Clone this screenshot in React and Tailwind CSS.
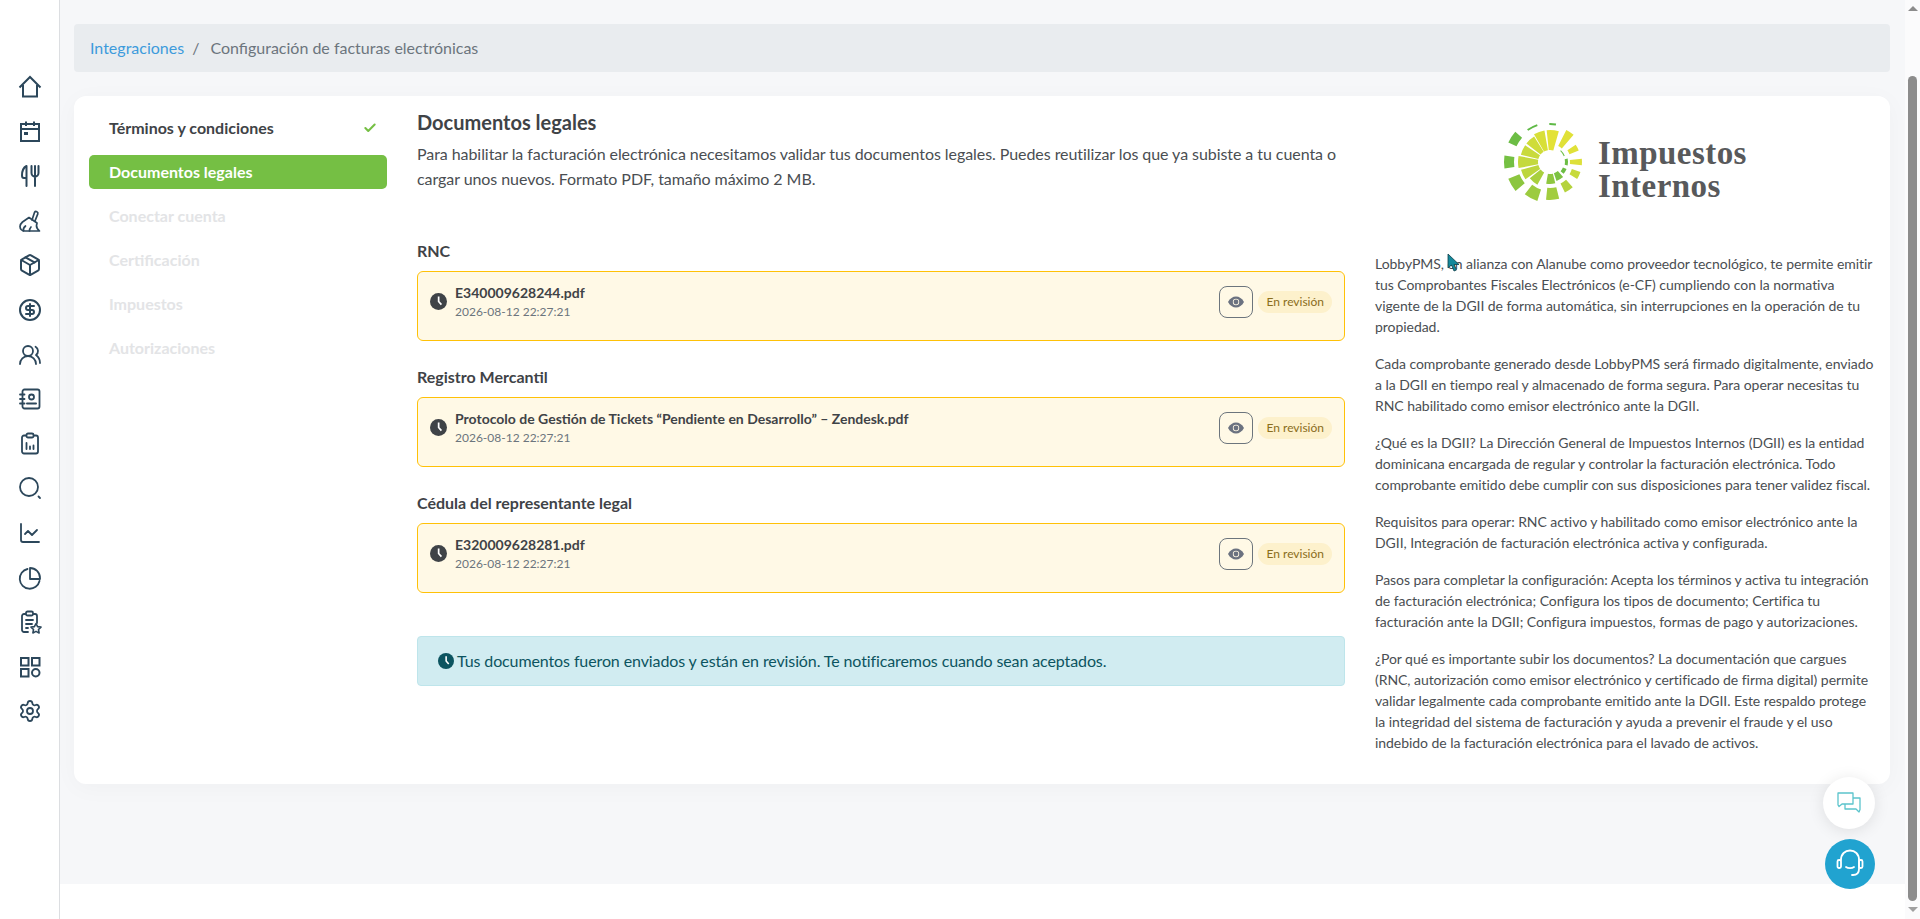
import React from "react";
import { Package, CircleDollarSign, UsersRound, ChartLine, Settings, Check } from "lucide-react";

const iconProps = { size: 24, strokeWidth: 1.8 };

const HomeIcon = () => (
  <svg width="24" height="24" viewBox="0 0 24 24" fill="none" stroke="currentColor" strokeWidth="2">
    <path d="M1.500 12.500L12 2l10.500 10.500" />
    <path d="M5 10v11.500h14V10" />
  </svg>
);

const CalendarIcon = () => (
  <svg width="24" height="24" viewBox="0 0 24 24" fill="none" stroke="currentColor" strokeWidth="2">
    <rect x="3" y="4" width="18" height="17" />
    <path d="M3 9h18M8 1.500V6M16 1.500V6" />
    <rect x="6" y="12" width="4" height="3" fill="currentColor" stroke="none" />
  </svg>
);

const CutleryIcon = () => (
  <svg width="24" height="24" viewBox="0 0 24 24" fill="none" stroke="currentColor" strokeWidth="2" strokeLinecap="round" strokeLinejoin="round">
    <path d="M8.500 22V2C5.500 3.500 4 7 4 11.500c0 1.500.8 2.500 2 2.500h2.500" />
    <path d="M13.500 2v7a3.500 3.500 0 0 0 7 0V2M17 2v20" />
  </svg>
);

const BroomIcon = () => (
  <svg width="24" height="24" viewBox="0 0 24 24" fill="none" stroke="currentColor" strokeWidth="1.700" strokeLinecap="round" strokeLinejoin="round">
    <path d="M14 11l2.500-7.500a1.800 1.800 0 0 1 3.300 1.400L17 12" />
    <path d="M11 8.500l8 5.500-.5 2.500c-.2 1.500 1 3.600 3 5.500H7c-3 0-5-2-5-4.500 0-1.500.8-3 2.500-4.500L11 8.500z" />
    <path d="M5.500 22c-.5-2 0-3.500 2-5M11.500 22c0-2 .5-3 1.500-4" />
  </svg>
);

const ContactIcon = () => (
  <svg width="24" height="24" viewBox="0 0 24 24" fill="none" stroke="currentColor" strokeWidth="1.800" strokeLinecap="round">
    <rect x="4.500" y="2.500" width="17" height="19" rx="2" />
    <path d="M2 7.500h4.500M2 12h4.500M2 16.500h4.500" />
    <circle cx="13.500" cy="10" r="2.500" />
    <path d="M9 16.500h9" strokeWidth="2" />
  </svg>
);

const ClipboardBars = () => (
  <svg width="24" height="24" viewBox="0 0 24 24" fill="none" stroke="currentColor" strokeWidth="1.800" strokeLinecap="round">
    <rect x="4" y="3.500" width="16" height="18" rx="2" />
    <rect x="8.500" y="1.500" width="7" height="4" rx="1.500" fill="#fff" />
    <path d="M8.500 11v6M12 14.500V17M15.500 13.500V17" />
  </svg>
);

const SearchIcon = () => (
  <svg width="24" height="24" viewBox="0 0 24 24" fill="none" stroke="currentColor" strokeWidth="1.800" strokeLinecap="round">
    <circle cx="11" cy="11" r="9" />
    <path d="M20.500 20.500l1.500 1.500" />
  </svg>
);

const PieIcon = () => (
  <svg width="24" height="24" viewBox="0 0 24 24" fill="none" stroke="currentColor" strokeWidth="1.800" strokeLinecap="round" strokeLinejoin="round">
    <path d="M21.500 15a10 10 0 1 1-12-12" />
    <path d="M12 2a10 10 0 0 1 10 10v1H12z" />
  </svg>
);

const ClipboardStar = () => (
  <svg width="24" height="24" viewBox="0 0 24 24" fill="none" stroke="currentColor" strokeWidth="1.800" strokeLinecap="round">
    <path d="M10 22H6a2 2 0 0 1-2-2V6a2 2 0 0 1 2-2h11a2 2 0 0 1 2 2v7" />
    <rect x="8" y="1.500" width="7" height="4" rx="1.500" fill="#fff" />
    <path d="M8 10h7M8 14h6M8 18h2" />
    <path d="M18 13.500l1.600 3.100 3.400.5-2.500 2.400.6 3.500-3.100-1.600-3.100 1.600.6-3.500-2.500-2.400 3.400-.5z" strokeWidth="1.600" fill="#fff" strokeLinejoin="round" />
  </svg>
);

const GridIcon = () => (
  <svg width="24" height="24" viewBox="0 0 24 24" fill="none" stroke="currentColor" strokeWidth="2">
    <rect x="3" y="3" width="7.500" height="7.500" />
    <rect x="14" y="3" width="7.500" height="7.500" />
    <rect x="3" y="14" width="7.500" height="7.500" />
    <circle cx="17.750" cy="17.750" r="3.750" />
  </svg>
);

const sideIcons = [
  <HomeIcon key="home" />,
  <CalendarIcon key="cal" />,
  <CutleryIcon key="food" />,
  <BroomIcon key="brush" />,
  <Package key="box" size={24} strokeWidth={2} />,
  <CircleDollarSign key="dollar" size={24} strokeWidth={2} />,
  <UsersRound key="users" {...iconProps} />,
  <ContactIcon key="contact" />,
  <ClipboardBars key="clip" />,
  <SearchIcon key="search" />,
  <ChartLine key="chart" {...iconProps} />,
  <PieIcon key="pie" />,
  <ClipboardStar key="star" />,
  <GridIcon key="grid" />,
  <Settings key="settings" {...iconProps} />,
];

const ClockIcon = ({ className }) => (
  <svg viewBox="0 0 24 24" className={className}>
    <circle cx="12" cy="12" r="12" fill="currentColor" />
    <path d="M11 5h2.400v6.500l3.600 4.200-1.800 1.500-4.200-5z" fill="#fff" />
  </svg>
);

const EyeIcon = () => (
  <svg width="16" height="12" viewBox="0 0 16 12">
    <path d="M0 6c2-3.600 4.800-5.500 8-5.500S14 2.400 16 6c-2 3.600-4.800 5.500-8 5.500S2 9.600 0 6z" fill="#6b7280" />
    <circle cx="8" cy="6" r="3.200" fill="#fff8e4" />
    <circle cx="8" cy="6" r="2.400" fill="#6b7280" />
  </svg>
);

// annular sector, angles clockwise from north
const sector = (r1, r2, a, w) => {
  const pt = (r, deg) => {
    const t = ((deg - 90) * Math.PI) / 180;
    return `${(r * Math.cos(t)).toFixed(2)} ${(r * Math.sin(t)).toFixed(2)}`;
  };
  return `M${pt(r1, a - w)} L${pt(r2, a - w)} A${r2} ${r2} 0 0 1 ${pt(r2, a + w)} L${pt(r1, a + w)} A${r1} ${r1} 0 0 0 ${pt(r1, a - w)}Z`;
};

const logoParts = [
  // inner wedges
  [12, 32, 5, 11, "#e3e236"],
  [12, 32, -20, 10, "#d8df38"],
  [12, 30, -42, 10, "#cfdc3a"],
  [12, 30, -66, 10, "#c9da3c"],
  [12, 32, -90, 11, "#c4d93d"],
  [12, 30, -115, 10, "#bdd63d"],
  [12, 26, -140, 11, "#a9d03e"],
  [12, 22, 178, 12, "#8fc740"],
  [12, 20, 150, 11, "#7cc242"],
  [14, 18, 122, 9, "#6cbd45"],
  [15, 18, 90, 11, "#6cbd45"],
  [15, 16, 55, 12, "#6cbd45"],
  // outer blocks
  [20, 32, 90, 6, "#dde03a"],
  [21, 31, 62, 6, "#e0e138"],
  [18, 36, 34, 7, "#e0e138"],
  [23, 32, 115, 7, "#c7da3c"],
  [24, 34, 146, 8, "#b5d33e"],
  [26, 38, 176, 10, "#a2cd3f"],
  [29, 41, 208, 10, "#9ccb40"],
  [33, 45, 239, 9, "#8cc63f"],
  [36, 46, 270, 8, "#75c043"],
  [37, 46, 303, 8, "#6cbd45"],
  [38, 40, 333, 8, "#5fb946"],
  [37, 39, 4, 5, "#5fb946"],
];

const Logo = () => (
  <div className="mt-[12px] flex items-center h-[80px] pl-[128px]">
    <svg width="82" height="80" viewBox="-47 -40 82 80" className="shrink-0">
      {logoParts.map(([r1, r2, a, w, c]) => (
        <path key={`${r1}-${a}`} d={sector(r1, r2, a, w)} fill={c} />
      ))}
    </svg>
    <div className="ml-[13px] pt-[16px] font-['Liberation_Serif',serif] font-bold text-[#58595b] text-[33px] leading-[33px] tracking-[0.45px]">
      <div>Impuestos</div>
      <div>Internos</div>
    </div>
  </div>
);

const steps = [
  { label: "Términos y condiciones", state: "done" },
  { label: "Documentos legales", state: "active" },
  { label: "Conectar cuenta" },
  { label: "Certificación" },
  { label: "Impuestos" },
  { label: "Autorizaciones" },
];

const docs = [
  { title: "RNC", file: "E340009628244.pdf" },
  { title: "Registro Mercantil", file: "Protocolo de Gestión de Tickets “Pendiente en Desarrollo” – Zendesk.pdf" },
  { title: "Cédula del representante legal", file: "E320009628281.pdf" },
];

const paragraphs = [
  "LobbyPMS, en alianza con Alanube como proveedor tecnológico, te permite emitir tus Comprobantes Fiscales Electrónicos (e-CF) cumpliendo con la normativa vigente de la DGII de forma automática, sin interrupciones en la operación de tu propiedad.",
  "Cada comprobante generado desde LobbyPMS será firmado digitalmente, enviado a la DGII en tiempo real y almacenado de forma segura. Para operar necesitas tu RNC habilitado como emisor electrónico ante la DGII.",
  "¿Qué es la DGII? La Dirección General de Impuestos Internos (DGII) es la entidad dominicana encargada de regular y controlar la facturación electrónica. Todo comprobante emitido debe cumplir con sus disposiciones para tener validez fiscal.",
  "Requisitos para operar: RNC activo y habilitado como emisor electrónico ante la DGII, Integración de facturación electrónica activa y configurada.",
  "Pasos para completar la configuración: Acepta los términos y activa tu integración de facturación electrónica; Configura los tipos de documento; Certifica tu facturación ante la DGII; Configura impuestos, formas de pago y autorizaciones.",
  "¿Por qué es importante subir los documentos? La documentación que cargues (RNC, autorización como emisor electrónico y certificado de firma digital) permite validar legalmente cada comprobante emitido ante la DGII. Este respaldo protege la integridad del sistema de facturación y ayuda a prevenir el fraude y el uso indebido de la facturación electrónica para el lavado de activos.",
];

export default function App() {
  return (
    <div className="flex h-[919px] overflow-hidden bg-white font-['Lato',sans-serif] text-[#3f4347]">
      {/* Sidebar */}
      <aside className="w-[60px] shrink-0 border-r border-[#dcdee1] flex flex-col items-center pt-[75px] gap-[20.600px] text-[#2c475b]">
        {sideIcons}
      </aside>

      {/* Content */}
      <div className="flex-1 min-w-0 relative">
        <main className="h-[884px] bg-[#f6f7f9] pt-[24px] pl-[14px] pr-[15px]">
          <nav className="h-[48px] bg-[#e9ecef] rounded-[4px] flex items-center px-[16px] text-[16px]">
            <span className="text-[#3d9bdc]">Integraciones</span>
            <span className="text-[#6c757d] px-[8px]">/</span>
            <span className="text-[#6c757d] pl-[3px]">Configuración de facturas electrónicas</span>
          </nav>

          <section className="mt-[24px] h-[688px] bg-white rounded-[12px] shadow-[0_4px_24px_rgba(0,0,0,0.03)] flex pl-[15px] pr-[15px]">
            {/* Steps */}
            <div className="w-[298px] shrink-0 pt-[15px]">
              {steps.map((s) => (
                <div
                  key={s.label}
                  className={`h-[34px] mb-[10px] pl-[20px] pr-[10px] rounded-[5px] flex items-center justify-between text-[16px] font-bold ${
                    s.state === "active" ? "bg-[#75bf44] text-white" : s.state === "done" ? "text-[#3f4347]" : "text-[#e3e4e6]"
                  }`}
                >
                  {s.label}
                  {s.state === "done" && <Check size={14} strokeWidth={3.500} className="text-[#75bf44]" />}
                </div>
              ))}
            </div>

            {/* Documents */}
            <div className="w-[928px] shrink-0 ml-[30px] pt-[14px]">
              <h2 className="text-[20px] leading-[24px] font-bold">Documentos legales</h2>
              <p className="mt-[7px] text-[16px] leading-[25px] tracking-[-0.065px] text-[#4a4e52]">
                Para habilitar la facturación electrónica necesitamos validar tus documentos legales. Puedes reutilizar los que ya subiste a tu cuenta o cargar unos nuevos. Formato PDF, tamaño máximo 2 MB.
              </p>

              <div className="mt-[48px] flex flex-col gap-[24px]">
                {docs.map((d) => (
                  <div key={d.title}>
                    <h3 className="text-[16px] leading-[24px] font-bold">{d.title}</h3>
                    <div className="mt-[8px] h-[70px] bg-[#fff9e6] border border-[#ffc107] rounded-[6px] flex items-center pl-[12px] pr-[12px] pb-[9px]">
                      <ClockIcon className="w-[17px] h-[17px] text-[#3f4347] shrink-0" />
                      <div className="ml-[8px] flex-1 min-w-0">
                        <div className="text-[14px] leading-[20px] font-bold">{d.file}</div>
                        <div className="text-[12px] leading-[17px] text-[#6c757d]">2026-08-12 22:27:21</div>
                      </div>
                      <button className="w-[34px] h-[32px] border border-[#6c757d] rounded-[8px] flex items-center justify-center">
                        <EyeIcon />
                      </button>
                      <span className="ml-[5px] h-[22px] px-[8px] rounded-full bg-[#fdf1cc] text-[#8a6d1b] text-[12px] leading-[22px]">En revisión</span>
                    </div>
                  </div>
                ))}
              </div>

              <div className="mt-[43px] h-[50px] bg-[#d1ecf1] border border-[#bee5eb] rounded-[4px] flex items-center pl-[20px] text-[#0c5460] text-[16px] tracking-[-0.11px]">
                <ClockIcon className="w-[16px] h-[16px] shrink-0" />
                <span className="ml-[3px]">Tus documentos fueron enviados y están en revisión. Te notificaremos cuando sean aceptados.</span>
              </div>
            </div>

            {/* Info */}
            <div className="flex-1 min-w-0 ml-[30px] pt-[14px]">
              <Logo />
              <div className="mt-[51px] flex flex-col gap-[16px] text-[14px] leading-[21px] tracking-[-0.05px] text-[#4a4e52]">
                {paragraphs.map((p) => (
                  <p key={p.slice(0, 16)}>{p}</p>
                ))}
              </div>
            </div>
          </section>
        </main>

        {/* Mouse pointer caught in the screenshot */}
        <svg width="13" height="19" viewBox="0 0 13 19" className="absolute left-[1387px] top-[253px]">
          <path d="M1 1l0 14 3.500-3 2.500 6 2.500-1-2.500-5.500H12z" fill="#14899b" stroke="#0f3f4a" strokeWidth="0.8" />
        </svg>

        {/* Floating buttons */}
        <button className="absolute left-[1763px] top-[777px] w-[52px] h-[52px] rounded-full bg-white shadow-[0_2px_16px_rgba(0,0,0,0.1)] flex items-center justify-center text-[#5bc4cc]">
          <svg width="24" height="22" viewBox="0 0 24 22" fill="none" stroke="currentColor" strokeWidth="1.300" strokeLinejoin="round">
            <path d="M1 1h15v11H5l-3 2.500L1 13z" />
            <path d="M16 6h7v11.500l-1 2.500-3-3H8v-5" />
          </svg>
        </button>
        <button className="absolute left-[1765px] top-[839px] w-[50px] h-[50px] rounded-full bg-[#21a3d0] flex items-center justify-center text-white">
          <svg width="30" height="32" viewBox="0 0 30 32" fill="none" stroke="currentColor" strokeWidth="1.800" strokeLinecap="round">
            <path d="M6 12C6 6 10 2.500 15 2.500S24 6 24 12v9c0 4-2 6-6 6h-1" />
            <rect x="2.500" y="12" width="3.500" height="8" rx="1.500" />
            <rect x="24" y="12" width="3.500" height="8" rx="1.500" />
            <path d="M11 19c2 1.500 6 1.500 8 0" />
          </svg>
        </button>
      </div>

      {/* Scrollbar */}
      <div className="w-[15px] shrink-0 bg-[#fbfbfc] flex flex-col items-center">
        <div className="mt-[6px] w-0 h-0 border-x-[5px] border-x-transparent border-b-[5px] border-b-[#8c8c8c]" />
        <div className="mt-[65px] h-[825px] w-[9px] bg-[#8c8c8c] rounded-[5px]" />
        <div className="mt-[6px] w-0 h-0 border-x-[5px] border-x-transparent border-t-[5px] border-t-[#a0a0a0]" />
      </div>
    </div>
  );
}
